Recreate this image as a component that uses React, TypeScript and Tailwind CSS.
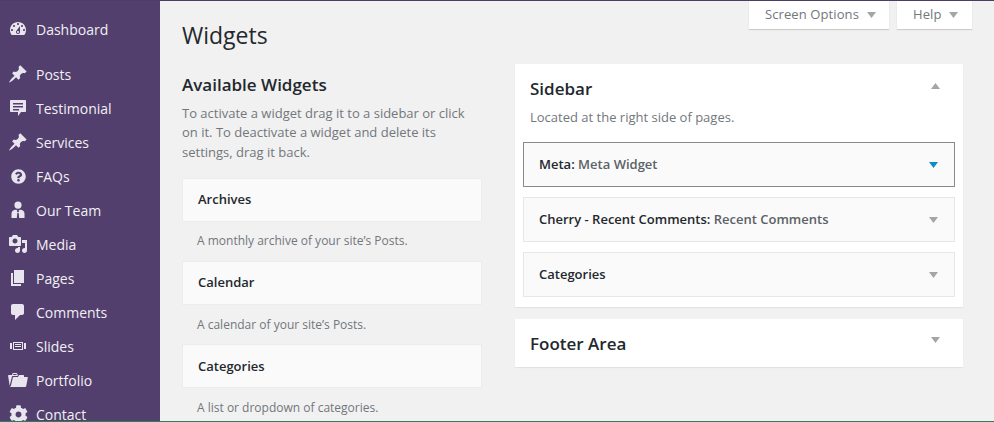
import React from "react";
import { FaQuestionCircle, FaCog } from "react-icons/fa";

const P: Record<string, React.ReactNode> = {
  dashboard: <path fillRule="evenodd" d="M3.76 16h12.48c1.1-1.37 1.76-3.11 1.76-5 0-4.42-3.58-8-8-8s-8 3.58-8 8c0 1.89.66 3.63 1.76 5zM10 4c.55 0 1 .45 1 1s-.45 1-1 1-1-.45-1-1 .45-1 1-1zM6 6c.55 0 1 .45 1 1s-.45 1-1 1-1-.45-1-1 .45-1 1-1zm8 0c.55 0 1 .45 1 1s-.45 1-1 1-1-.45-1-1 .45-1 1-1zm-5.37 5.55L12 7v6c0 1.1-.9 2-2 2s-2-.9-2-2c0-.57.24-1.08.63-1.45zM4 10c.55 0 1 .45 1 1s-.45 1-1 1-1-.45-1-1 .45-1 1-1zm12 0c.55 0 1 .45 1 1s-.45 1-1 1-1-.45-1-1 .45-1 1-1zm-5 3c0-.55-.45-1-1-1s-1 .45-1 1 .45 1 1 1 1-.45 1-1z" />,
  pin: <path d="M10.44 3.02l1.82-1.82 6.36 6.35-1.83 1.82c-1.05-.68-2.48-.57-3.41.36l-.75.75c-.92.93-1.04 2.35-.35 3.41l-1.83 1.82-2.41-2.41-2.8 2.79c-.42.42-3.38 2.71-3.8 2.29s1.86-3.39 2.28-3.81l2.79-2.79L4.1 9.36l1.83-1.82c1.05.69 2.48.57 3.4-.36l.75-.75c.93-.92 1.05-2.35.36-3.41z" />,
  testimonial: <path fillRule="evenodd" d="M3 2h14c.6 0 1 .4 1 1v10c0 .6-.4 1-1 1h-4l-3 4v-4H3c-.6 0-1-.4-1-1V3c0-.6.4-1 1-1zm2 3v1.500h10V5H5zm0 3v1.500h10V8H5zm0 3v1.500h6V11H5z" />,
  team: <path d="M10 1.500a3.600 3.600 0 1 1 0 7.200 3.600 3.600 0 0 1 0-7.200zM7 9.800l2.300.200-.5 1.300 1.200 1.200 1.200-1.200-.5-1.300 2.300-.2c2 .3 3.500 1.800 3.500 4V18H3.500v-4.200c0-2.200 1.500-3.700 3.500-4zM9.300 13 8.800 18h2.400l-.5-5H9.300z" />,
  media: <path fillRule="evenodd" d="M13 11V4c0-.55-.45-1-1-1h-1.670L9 1H5L3.670 3H2c-.55 0-1 .45-1 1v7c0 .55.45 1 1 1h10c.55 0 1-.45 1-1zM7 4.500c1.380 0 2.500 1.120 2.500 2.500S8.380 9.500 7 9.500 4.500 8.380 4.500 7 5.620 4.500 7 4.500zM14 6h5v10.500c0 1.380-1.120 2.500-2.500 2.500S14 17.880 14 16.500s1.120-2.500 2.500-2.500c.17 0 .34.020.5.050V9h-3V6zm-4 8.050V13h2v3.500c0 1.380-1.120 2.500-2.500 2.500S7 17.880 7 16.500 8.120 14 9.500 14c.17 0 .34.020.5.050z" />,
  pages: <path d="M6 15V2h10v13H6zm-1 1h8v2H3V5h2v11z" />,
  comments: <path d="M5 2h9c1.100 0 2 .9 2 2v7c0 1.100-.9 2-2 2h-2l-5 5v-5H5c-1.100 0-2-.9-2-2V4c0-1.100.9-2 2-2z" />,
  slides: <path fillRule="evenodd" d="M5 14V6h10v8H5zm-3-1V7h2v6H2zm4-6v6h8V7H6zm10 0h2v6h-2V7zM7 8h6v1H7V8zm0 2h6v1H7v-1z" />,
  portfolio: <path fillRule="evenodd" d="M4 5H.78c-.37 0-.74.32-.69.84l1.560 9.990S3.500 8.470 3.860 6.700c.11-.53.61-.7.98-.7H10s-.7-2.080-.77-2.310C9.110 3.250 8.890 3 8.450 3H5.140c-.36 0-.7.23-.8.64C4.250 4.040 4 5 4 5zm4.880 0h-4s.42-1 .87-1h2.130c.48 0 1 1 1 1zM2.670 16.250c-.31.47-.76.75-1.260.75h15.730c.54 0 .92-.31 1.030-.83.44-2.190 1.680-8.440 1.680-8.440.07-.5-.3-.73-.62-.73H16V5.530c0-.16-.26-.53-.66-.53h-3.760c-.52 0-.87.58-.87.58L10 7H5.590c-.32 0-.63.190-.69.5 0 0-1.590 6.700-1.720 7.330-.07.37-.22.99-.51 1.420z" />,
};

function Icon({ name }: { name: string }) {
  if (name === "faq") return <FaQuestionCircle className="h-[15px] w-[15px]" />;
  if (name === "cog") return <FaCog className="h-[19px] w-[19px]" />;
  return (
    <svg viewBox="0 0 20 20" className="h-5 w-5 fill-current">
      {P[name]}
    </svg>
  );
}

const menu = [
  ["Posts", "pin"],
  ["Testimonial", "testimonial"],
  ["Services", "pin"],
  ["FAQs", "faq"],
  ["Our Team", "team"],
  ["Media", "media"],
  ["Pages", "pages"],
  ["Comments", "comments"],
  ["Slides", "slides"],
  ["Portfolio", "portfolio"],
  ["Contact", "cog"],
];

function MenuItem({ label, icon }: { label: string; icon: string }) {
  return (
    <div className="flex h-[34px] shrink-0 items-center text-[14px] text-[#f1eff4]">
      <span className="flex w-9 justify-center text-[#e9e5ef]">
        <Icon name={icon} />
      </span>
      <span>{label}</span>
    </div>
  );
}

function Arrow({ up, color = "#a5a5a5" }: { up?: boolean; color?: string }) {
  return (
    <svg viewBox="0 0 9 6" className="h-[6px] w-[9px] shrink-0">
      <polygon points={up ? "4.5,0 9,6 0,6" : "0,0 9,0 4.5,6"} fill={color} />
    </svg>
  );
}

function AvailableWidget({ title, desc }: { title: string; desc: string }) {
  return (
    <div className="h-[83.3px] shrink-0">
      <div className="flex h-[44px] items-center border border-[#ececec] bg-[#fafafa] px-[15px] text-[13px] font-semibold text-[#23282d]">
        {title}
      </div>
      <p className="mt-[10.5px] pl-[15px] text-[12px] leading-[18px] text-[#72777c]">{desc}</p>
    </div>
  );
}

function SidebarWidget({ title, sub, active }: { title: string; sub?: string; active?: boolean }) {
  return (
    <div
      className={`flex h-[45px] items-center justify-between border bg-[#fafafa] pr-[16px] pl-[15px] text-[13px] font-semibold text-[#23282d] ${
        active ? "border-[#8a8a8a]" : "border-[#e7e7e7]"
      }`}
    >
      <span>
        {title}
        {sub && (
          <>
            : <span className="text-[#5c6166]">{sub}</span>
          </>
        )}
      </span>
      <Arrow color={active ? "#0a8fc4" : "#a5a5a5"} />
    </div>
  );
}

export default function App() {
  return (
    <div
      className="flex h-[422px] w-[994px] flex-col overflow-hidden bg-[#f1f1f1]"
      style={{ fontFamily: '"Open Sans", "Noto Sans", sans-serif' }}
    >
      <div className="h-px shrink-0 bg-[#4d3d63]" />
      <div className="flex min-h-0 flex-1">
        <aside className="flex w-[160px] shrink-0 flex-col overflow-hidden bg-[#523f6d] pt-[11px]">
          <div className="mb-[11px]">
            <MenuItem label="Dashboard" icon="dashboard" />
          </div>
          {menu.map(([l, i]) => (
            <MenuItem key={l} label={l} icon={i} />
          ))}
        </aside>
        <main className="min-w-0 flex-1 overflow-hidden">
          <div className="flex items-start justify-between pr-[22px] pl-[22px]">
            <h1 className="pt-[17px] text-[23px] leading-[35px] font-normal text-[#23282d]">Widgets</h1>
            <div className="flex gap-2">
              <div className="flex h-[28px] w-[140px] items-center gap-[8px] bg-white pl-[16px] text-[13px] tracking-[0.1px] text-[#72777c] shadow-[0_1px_1px_rgba(0,0,0,0.15)]">
                Screen Options <Arrow />
              </div>
              <div className="flex h-[28px] w-[75px] items-center gap-[7px] bg-white pl-[16px] text-[13px] tracking-[0.1px] text-[#72777c] shadow-[0_1px_1px_rgba(0,0,0,0.15)]">
                Help <Arrow />
              </div>
            </div>
          </div>
          <div className="flex pl-[22px]">
            <section className="w-[300px] shrink-0 pt-[20px]">
              <h2 className="text-[17px] leading-[24px] font-semibold text-[#23282d]">Available Widgets</h2>
              <p className="mt-[6.8px] mb-[15.5px] text-[13px] leading-[19.5px] text-[#72777c]">
                To activate a widget drag it to a sidebar or click on it. To deactivate a widget and delete its settings, drag it back.
              </p>
              <AvailableWidget title="Archives" desc="A monthly archive of your site’s Posts." />
              <AvailableWidget title="Calendar" desc="A calendar of your site’s Posts." />
              <AvailableWidget title="Categories" desc="A list or dropdown of categories." />
            </section>
            <section className="ml-[33px] w-[448px] shrink-0 pt-[11px]">
              <div className="border border-white bg-white px-[7px] pt-[12px] pb-[9px] shadow-[0_1px_1px_rgba(0,0,0,0.06)]">
                <div className="flex items-center justify-between pr-[15px] pl-[7px]">
                  <h3 className="text-[17px] leading-[24px] font-semibold text-[#23282d]">Sidebar</h3>
                  <span className="-translate-y-[3px]">
                    <Arrow up />
                  </span>
                </div>
                <p className="mt-[7px] mb-[16px] pl-[7px] text-[13px] leading-[18px] text-[#72777c]">Located at the right side of pages.</p>
                <div className="flex flex-col gap-[10px]">
                  <SidebarWidget title="Meta" sub="Meta Widget" active />
                  <SidebarWidget title="Cherry - Recent Comments" sub="Recent Comments" />
                  <SidebarWidget title="Categories" />
                </div>
              </div>
              <div className="mt-[12px] flex h-[48px] items-center justify-between border border-white bg-white pr-[22px] pl-[14px] shadow-[0_1px_1px_rgba(0,0,0,0.06)]">
                <h3 className="pt-[2px] text-[17px] font-semibold text-[#23282d]">Footer Area</h3>
                <span className="-translate-y-[3px]">
                  <Arrow />
                </span>
              </div>
            </section>
          </div>
        </main>
      </div>
      <div className="h-px shrink-0 bg-[#2f7d5b]" />
    </div>
  );
}
